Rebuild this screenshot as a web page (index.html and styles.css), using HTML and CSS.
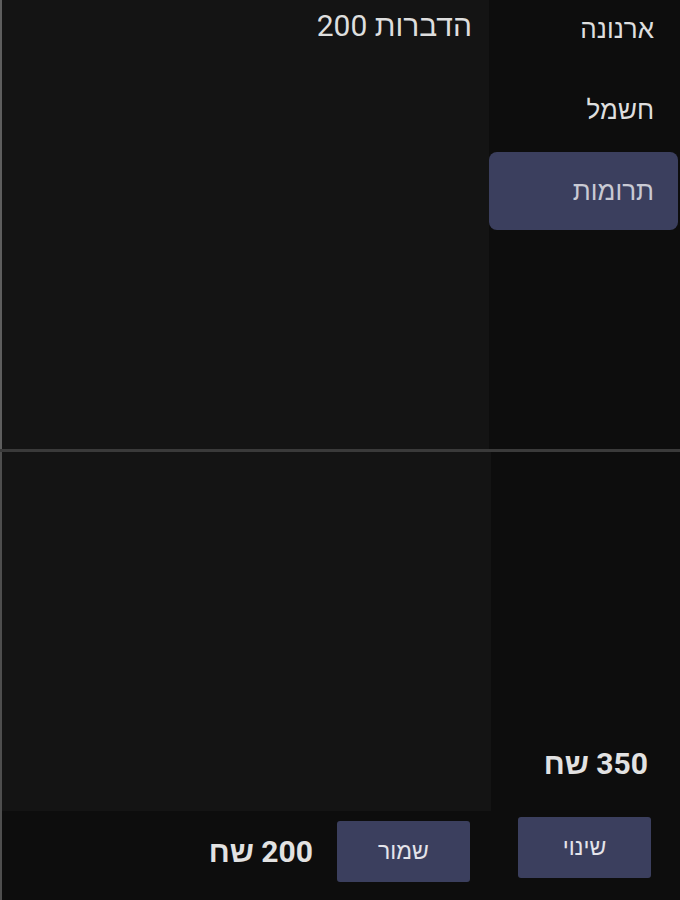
FILE: index.html
```html
<!DOCTYPE html>
<html lang="he" dir="rtl">
<head>
    <meta charset="UTF-8">
    <meta name="viewport" content="width=device-width, initial-scale=1.0">
    <title>הוצאות</title>
    <link rel="stylesheet" href="styles.css">
</head>
<body>
    <div class="screen">
        <div class="row top">
            <div class="sidebar">
                <ul class="menu">
                    <li class="menu-item">ארנונה</li>
                    <li class="menu-item">חשמל</li>
                    <li class="menu-item active">תרומות</li>
                </ul>
            </div>
            <div class="panel">
                <div class="entry">הדברות 200</div>
            </div>
        </div>

        <div class="divider"></div>

        <div class="row bottom">
            <div class="sidebar summary">
                <div class="amount">350 שח</div>
                <button type="button" class="btn btn-change">שינוי</button>
            </div>
            <div class="main">
                <div class="panel content"></div>
                <div class="bar">
                    <button type="button" class="btn btn-save">שמור</button>
                    <div class="amount">200 שח</div>
                </div>
            </div>
        </div>
    </div>
</body>
</html>
```

FILE: styles.css
```css
html, body {
    margin: 0;
    padding: 0;
    background-color: #0d0d0d;
}
body {
    font-family: Roboto, "Liberation Sans", sans-serif;
    color: #dcdcdc;
    width: 680px;
    height: 900px;
    overflow: hidden;
}
.screen {
    display: flex;
    flex-direction: column;
    height: 900px;
}
.row {
    display: flex;
}
.top {
    height: 449px;
}
.bottom {
    height: 448px;
    border-left: 2px solid #4e4e4e;
}
.sidebar {
    width: 191px;
    flex-shrink: 0;
    background-color: #0d0d0d;
}
.menu {
    list-style: none;
    margin: -10px 2px 0 0;
    padding: 0;
    display: flex;
    flex-direction: column;
    gap: 3px;
}
.menu-item {
    height: 78px;
    display: flex;
    align-items: center;
    padding-right: 24px;
    font-size: 26px;
    color: #dedede;
    border-radius: 8px;
}
.menu-item.active {
    background-color: #3b3f5e;
    color: #c9cad4;
}
.panel {
    flex: 1;
    background-color: #141414;
}
.top .panel {
    border-left: 2px solid #5e5e5e;
}
.entry {
    padding: 8px 17px 0 0;
    font-size: 30px;
    color: #dedede;
}
.divider {
    height: 3px;
    background-color: #3a3a3a;
}
.summary {
    width: 189px;
    display: flex;
    flex-direction: column;
    justify-content: flex-end;
    align-items: flex-start;
    padding-bottom: 22px;
    box-sizing: border-box;
}
.amount {
    font-size: 30px;
    font-weight: bold;
    color: #e2e2e2;
}
.summary .amount {
    margin: 0 32px 36px 0;
}
.main {
    flex: 1;
    display: flex;
    flex-direction: column;
}
.content {
    height: 359px;
    flex: none;
}
.bar {
    flex: 1;
    display: flex;
    align-items: center;
    padding: 0 21px 9px 0;
    gap: 24px;
}
.btn {
    width: 133px;
    height: 61px;
    border: none;
    border-radius: 3px;
    background-color: #3b3f5e;
    color: #e4e4ea;
    font-family: inherit;
    font-size: 23px;
    cursor: pointer;
}
.btn-change {
    margin-right: 29px;
}
```
